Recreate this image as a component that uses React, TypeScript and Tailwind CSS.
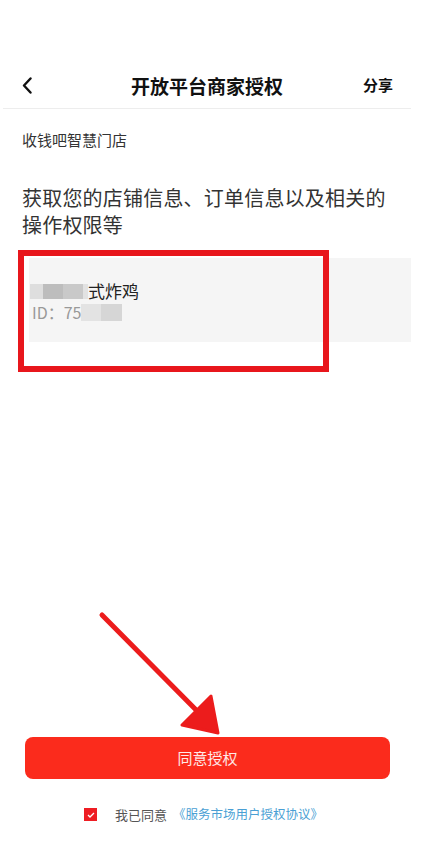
import type { JSX } from "react";

const FONT = "font-['Noto_Sans_CJK_SC','Noto_Sans',sans-serif]";

function BackIcon() {
  return (
    <svg width="10" height="17" viewBox="0 0 10 17" fill="none">
      <polyline
        points="8.5,1.5 2,8.5 8.5,15.5"
        stroke="#111"
        strokeWidth="2.4"
        strokeLinecap="round"
        strokeLinejoin="round"
      />
    </svg>
  );
}

/** Pixelated mosaic used to hide part of the shop name / id. */
function Mosaic({ cells, h }: { cells: { w: number; c: string }[]; h: number }) {
  return (
    <span className="inline-flex align-middle">
      {cells.map((cell, i) => (
        <span key={i} style={{ width: cell.w, height: h, background: cell.c }} />
      ))}
    </span>
  );
}

function Arrow() {
  return (
    <svg
      className="pointer-events-none absolute left-[90px] top-[604px]"
      width="140"
      height="140"
      viewBox="90 604 140 140"
    >
      <line x1="102" y1="615" x2="212" y2="726" stroke="#ec1c1c" strokeWidth="5" strokeLinecap="round" />
      <polygon points="211,696 218,733 182,725" fill="#ec1c1c" stroke="#ec1c1c" strokeWidth="3" strokeLinejoin="round" />
    </svg>
  );
}

export default function App(): JSX.Element {
  return (
    <div className={`relative flex h-[849px] w-full flex-col bg-white ${FONT}`}>
      <div className="h-[62px] shrink-0" />

      <header className="ml-[3px] mr-[10px] grid h-[47px] grid-cols-[1fr_auto_1fr] items-center border-b border-[#ededed]">
        <div className="pl-[19px]">
          <BackIcon />
        </div>
        <h1 className="text-[19px] font-bold leading-none text-[#111]">开放平台商家授权</h1>
        <div className="pr-[18px] text-right text-[15px] font-bold text-[#111]">分享</div>
      </header>

      <main className="pl-[22px] pr-[10px]">
        <p className="mt-[20px] text-[15px] leading-[22px] text-[#333]">收钱吧智慧门店</p>
        <p className="mt-[33px] pr-[20px] text-[20px] leading-[27px] tracking-[0.2px] text-[#333]">
          获取您的店铺信息、订单信息以及相关的操作权限等
        </p>

        <div className="ml-[7px] mt-[20px] h-[84px] bg-[#f5f5f5] pl-[1px] pt-[22px]">
          <div className="flex h-[22px] items-center text-[17px] text-[#222]">
            <Mosaic
              h={15}
              cells={[
                { w: 13, c: "#dedede" },
                { w: 20, c: "#bdbdbd" },
                { w: 20, c: "#c9c9c9" },
                { w: 5, c: "#e2e2e2" },
              ]}
            />
            <span>式炸鸡</span>
          </div>
          <div className="flex h-[20px] items-center pl-[2px] text-[16px] text-[#999]">
            <span>ID：75</span>
            <Mosaic
              h={17}
              cells={[
                { w: 20, c: "#e3e3e3" },
                { w: 21, c: "#d6d6d6" },
              ]}
            />
          </div>
        </div>
      </main>

      <div className="pointer-events-none absolute left-[18px] top-[250px] h-[122px] w-[311px] border-[6px] border-[#e8161c]" />
      <Arrow />

      <div className="mt-auto pb-[28px]">
        <button className="ml-[25px] flex h-[42px] w-[365px] items-center justify-center rounded-[8px] bg-[#fb2b1c] text-[15px] text-white/90">
          同意授权
        </button>
        <div className="mt-[29px] flex items-center pl-[84px]">
          <span className="flex h-[13px] w-[13px] items-center justify-center bg-[#ee1d23]">
            <svg width="8" height="6" viewBox="0 0 8 6" fill="none">
              <polyline points="1,3 3,5 7,1" stroke="white" strokeWidth="1.3" />
            </svg>
          </span>
          <span className="ml-[18px] text-[13px] leading-none text-[#555]">我已同意</span>
          <span className="ml-[6px] text-[12.5px] leading-none text-[#4a9fd4]">《服务市场用户授权协议》</span>
        </div>
      </div>
    </div>
  );
}
